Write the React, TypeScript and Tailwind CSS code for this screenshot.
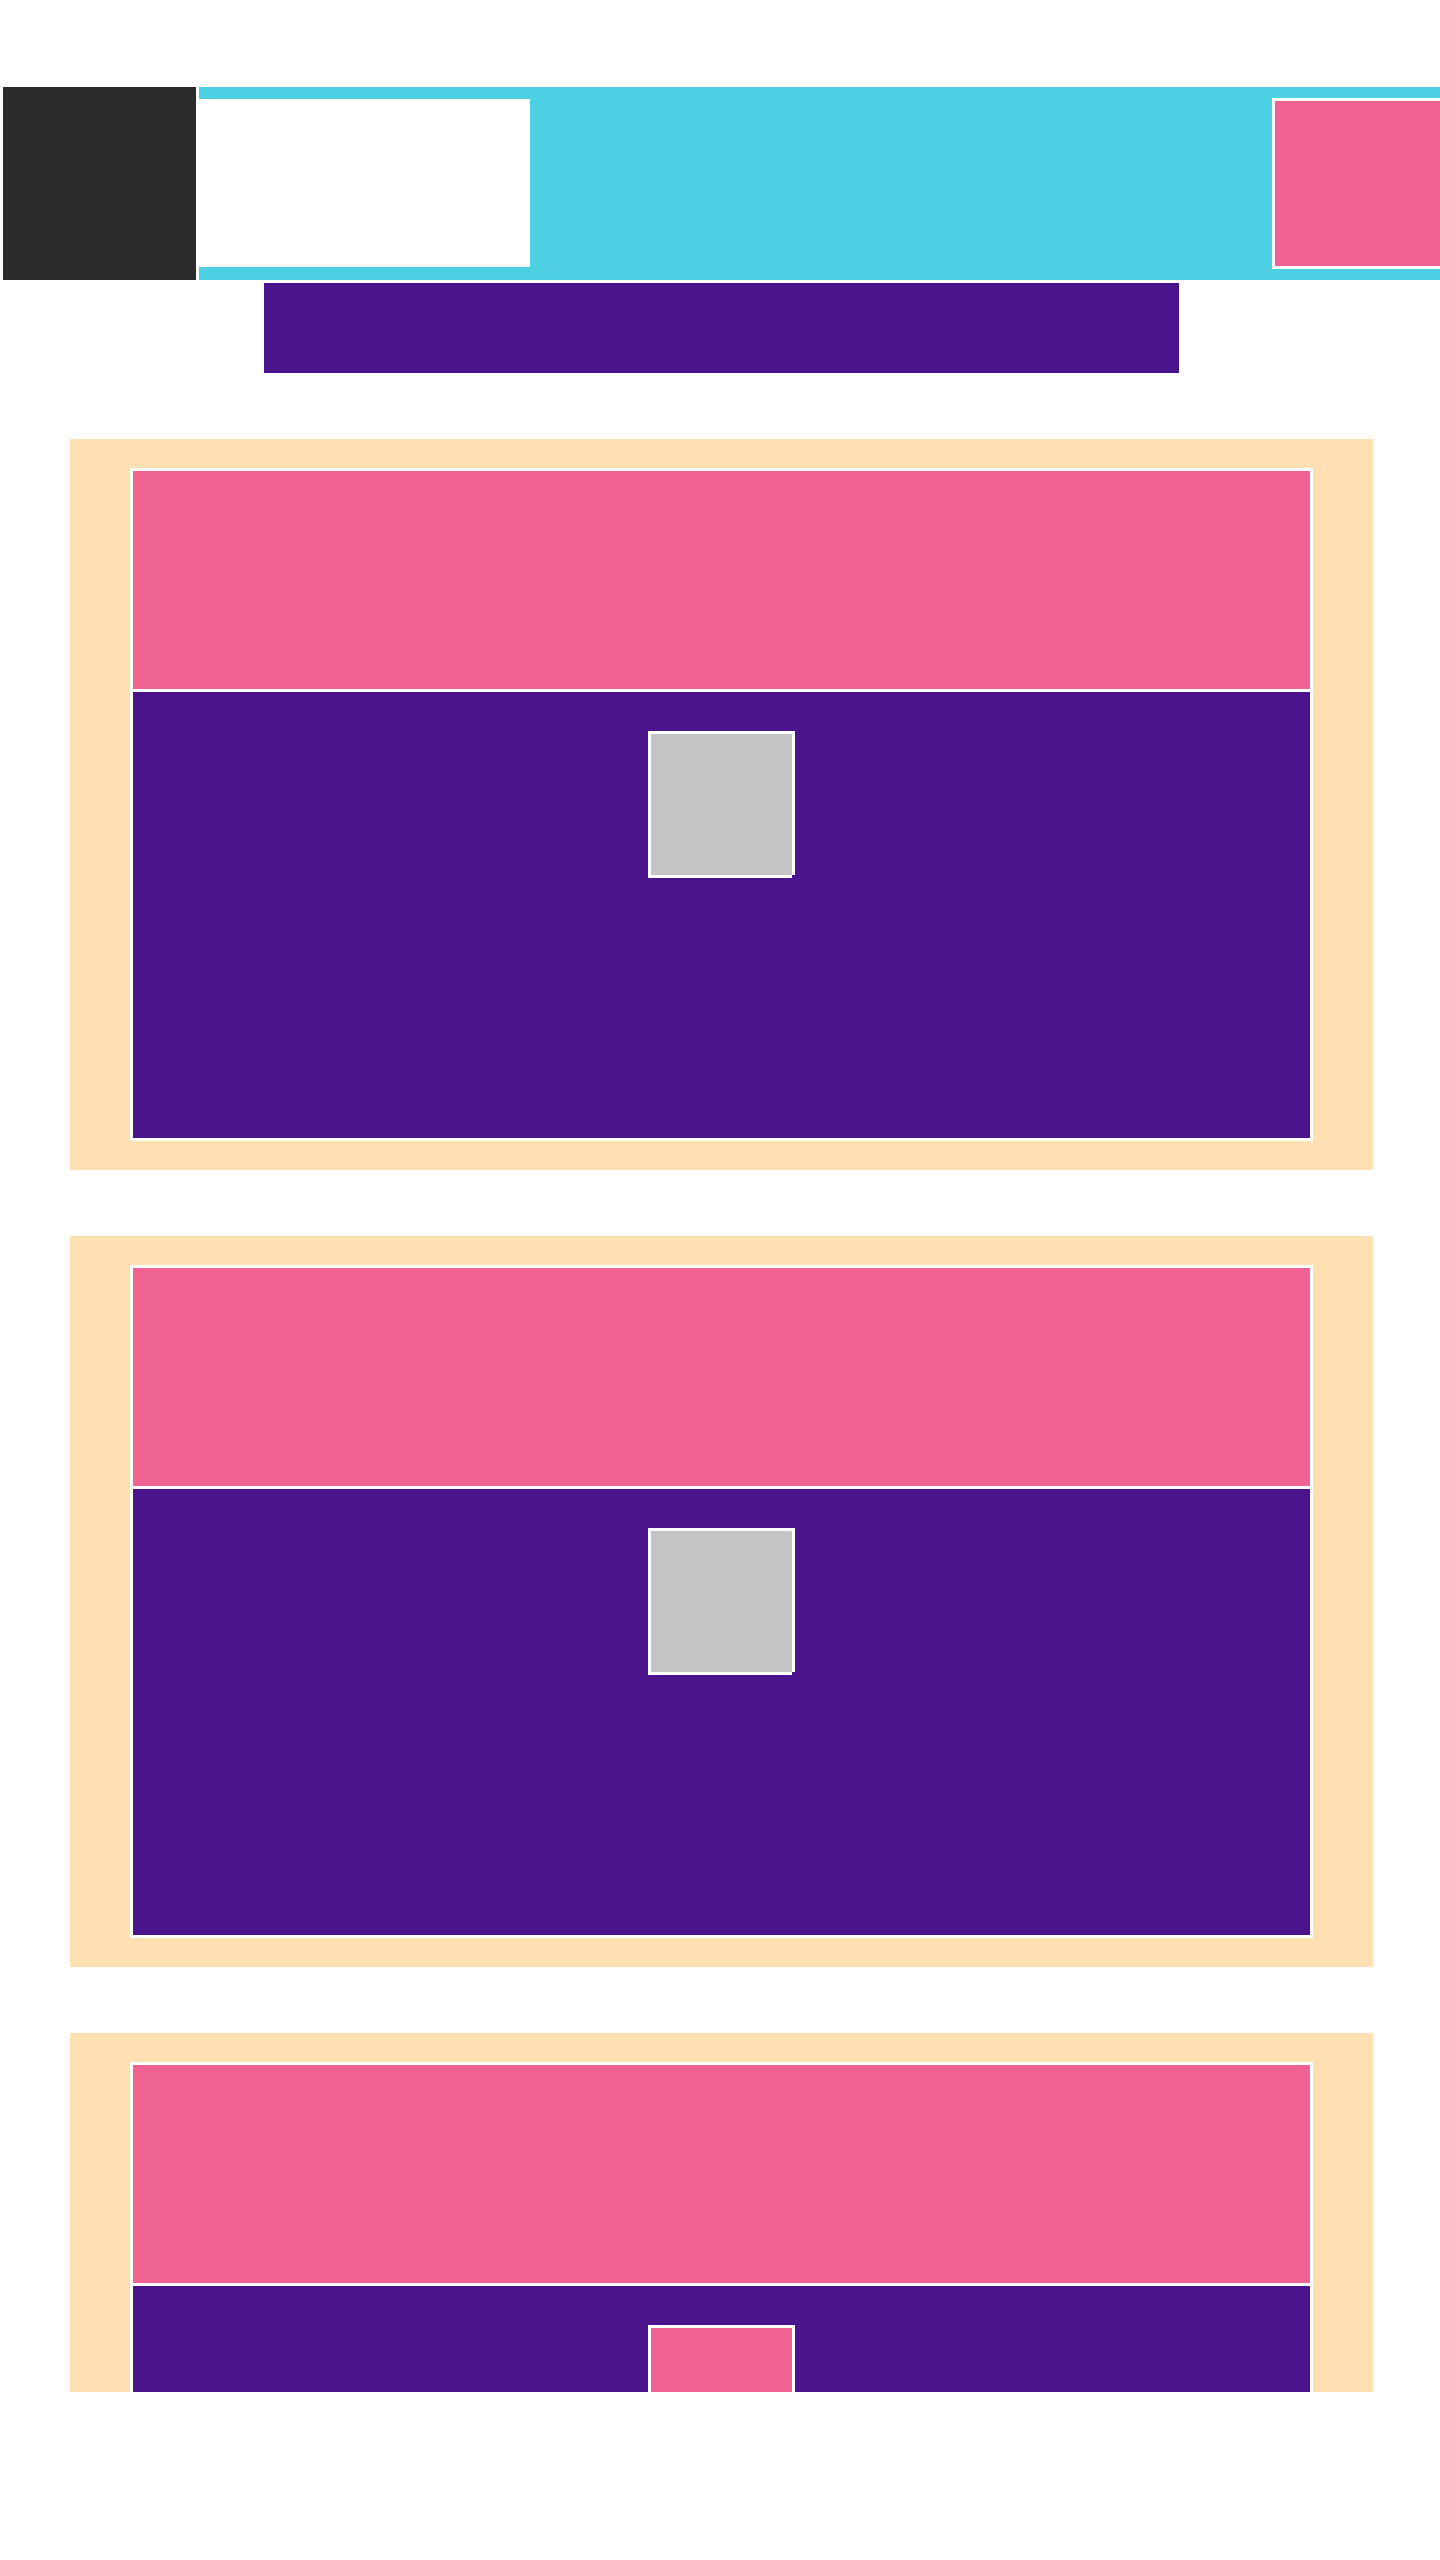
const CARDS = [{ fill: "bg-[#c4c4c4]" }, { fill: "bg-[#c4c4c4]" }, { fill: "bg-[#f06292]" }];

// white 3px frame whose bottom-right corner is left open
function Notch({ bg }: { bg: string }) {
  return <span className={`absolute -right-[3px] -bottom-[3px] size-[3px] ${bg}`} />;
}

function Card({ fill }: { fill: string }) {
  return (
    <div className="shrink-0 bg-[#ffe0b2] px-[60px] py-[29px]">
      <div className="flex flex-col border-[3px] border-white bg-white">
        <div className="h-[218px] bg-[#f06292]" />
        <div className="mt-[3px] flex h-[446px] justify-center bg-[#4a148c] pt-[39px]">
          <div className={`relative size-[147px] border-[3px] border-white ${fill}`}>
            <Notch bg="bg-[#4a148c]" />
          </div>
        </div>
      </div>
    </div>
  );
}

export default function App() {
  return (
    <div className="min-h-[2560px] w-full overflow-hidden bg-white pt-[87px]">
      <header className="flex h-[193px] gap-[3px] pl-[3px]">
        <div className="w-[193px] shrink-0 bg-[#2b2b2b]" />
        <div className="flex flex-1 items-start overflow-hidden bg-[#4dd0e1]">
          <div className="relative mt-[12px] h-[168px] w-[331px] shrink-0 bg-white">
            <Notch bg="bg-[#4dd0e1]" />
          </div>
          <div className="mt-[11px] ml-[742px] h-[171px] w-[200px] shrink-0 border-[3px] border-white bg-[#f06292]" />
        </div>
      </header>

      <div className="mt-[3px] ml-[264px] h-[90px] w-[915px] bg-[#4a148c]" />

      <main className="mt-[66px] ml-[70px] flex h-[1953px] w-[1303px] flex-col gap-[66px] overflow-hidden">
        {CARDS.map((c, i) => (
          <Card key={i} fill={c.fill} />
        ))}
      </main>
    </div>
  );
}
